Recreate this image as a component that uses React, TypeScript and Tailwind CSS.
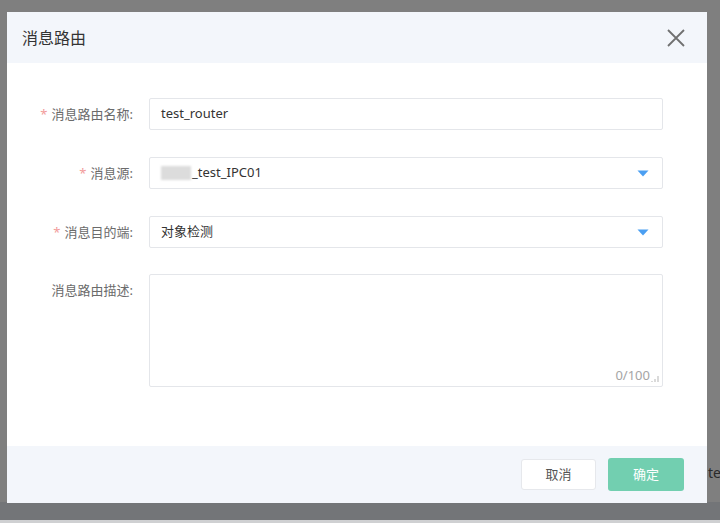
import React from "react";

const FONT = { fontFamily: '"Noto Sans", "Noto Sans CJK SC", sans-serif' };

function Label({ text, required }: { text: string; required?: boolean }) {
  return (
    <div className="flex w-[126px] shrink-0 justify-end pt-[8px] text-[13px] leading-[16px] text-[#6b6b6b]">
      {required && <span className="mr-[4px] text-[#f29b9b]">*</span>}
      <span>{text}</span>
    </div>
  );
}

function Caret() {
  return (
    <svg width="12" height="7" viewBox="0 0 12 7" className="shrink-0">
      <path d="M0.5 0.5 L11.5 0.5 L6 6.5 Z" fill="#4b9ff2" />
    </svg>
  );
}

export default function App() {
  return (
    <div
      className="relative h-[523px] w-[720px] overflow-hidden bg-[#7f7f7f]"
      style={FONT}
    >
      {/* page content peeking behind the overlay */}
      <div className="absolute left-[708px] top-[462px] text-[14px] text-[#2a2a2a]">te</div>
      <div className="absolute bottom-0 left-0 h-[21px] w-full bg-[#737578]" />
      <div className="absolute bottom-0 left-0 h-[3px] w-full bg-[#cfd0d2]" />

      <div className="relative ml-[7px] mt-[12px] flex h-[491px] w-[700px] flex-col bg-white">
        {/* header */}
        <div className="flex h-[51px] shrink-0 items-center justify-between bg-[#f3f6fb] pl-[15px] pr-[21px]">
          <span className="text-[16px] text-[#333]">消息路由</span>
          <svg width="20" height="20" viewBox="0 0 20 20">
            <path d="M2 2 L18 18 M18 2 L2 18" stroke="#707070" strokeWidth="1.8" fill="none" />
          </svg>
        </div>

        {/* body */}
        <div className="flex flex-1 flex-col gap-[27px] pt-[35px]">
          <div className="flex gap-[16px]">
            <Label text="消息路由名称:" required />
            <div className="flex h-[32px] w-[514px] items-center rounded-[2px] border border-[#e4e6ea] px-[11px] text-[13px] text-[#333]">
              test_router
            </div>
          </div>

          <div className="flex gap-[16px]">
            <Label text="消息源:" required />
            <div className="flex h-[32px] w-[514px] items-center justify-between rounded-[2px] border border-[#e4e6ea] pl-[11px] pr-[13px] text-[13px] text-[#333]">
              <span className="flex items-center">
                <span className="mr-[1px] inline-block h-[14px] w-[30px] bg-[#dcdcdc] blur-[1px]" />
                _test_IPC01
              </span>
              <Caret />
            </div>
          </div>

          <div className="flex gap-[16px]">
            <Label text="消息目的端:" required />
            <div className="flex h-[32px] w-[514px] items-center justify-between rounded-[2px] border border-[#e4e6ea] pl-[11px] pr-[13px] text-[13px] text-[#333]">
              <span>对象检测</span>
              <Caret />
            </div>
          </div>

          <div className="-mt-[1px] flex gap-[16px]">
            <Label text="消息路由描述:" />
            <div className="flex h-[113px] w-[514px] items-end justify-end rounded-[2px] border border-[#e4e6ea] pb-[2px] pr-[3px]">
              <span className="text-[13px] leading-[17px] text-[#a5a5a5]">0/100</span>
              <svg width="8" height="8" viewBox="0 0 8 8" className="mb-[1px] ml-[1px]">
                <path d="M7 1 L7 7 M4 4 L4 7 M1 6 L1 7" stroke="#b5b5b5" strokeWidth="1" />
              </svg>
            </div>
          </div>
        </div>

        {/* footer */}
        <div className="flex h-[57px] shrink-0 items-center justify-end gap-[12px] bg-[#f3f6fb] pr-[23px]">
          <button className="h-[31px] w-[75px] rounded-[3px] border border-[#e6e8ec] bg-white text-[13px] text-[#555]">
            取消
          </button>
          <button className="h-[33px] w-[76px] rounded-[3px] bg-[#72cfb0] text-[13px] text-white">
            确定
          </button>
        </div>
      </div>
    </div>
  );
}
